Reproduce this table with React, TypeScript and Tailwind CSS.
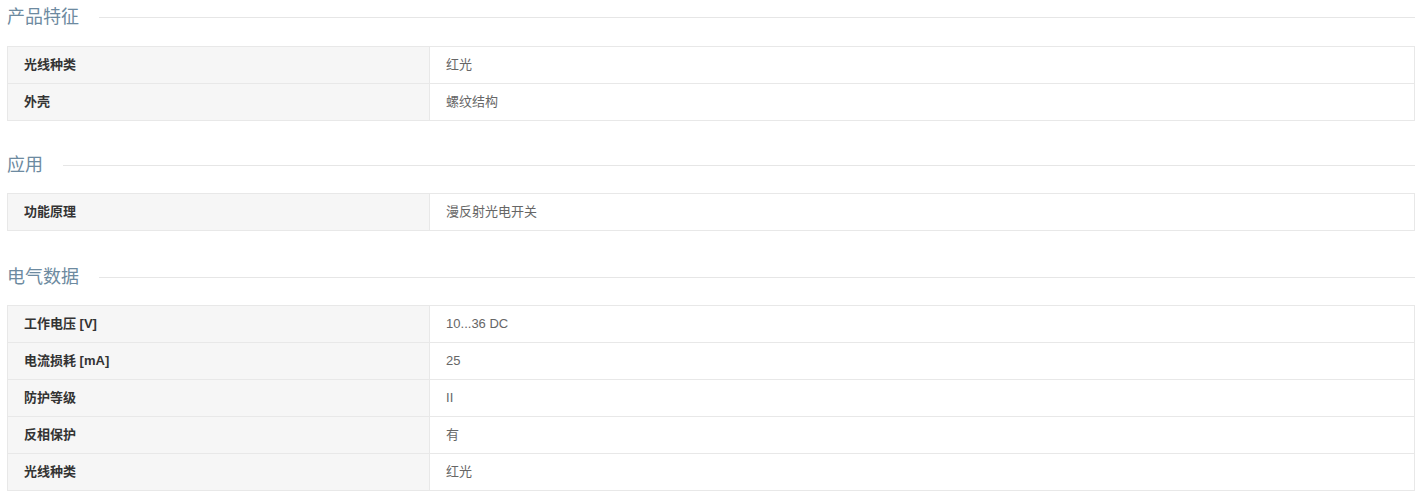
const sections: { title: string; rows: [string, string][] }[] = [
  {
    title: '产品特征',
    rows: [
      ['光线种类', '红光'],
      ['外壳', '螺纹结构'],
    ],
  },
  {
    title: '应用',
    rows: [['功能原理', '漫反射光电开关']],
  },
  {
    title: '电气数据',
    rows: [
      ['工作电压 [V]', '10...36 DC'],
      ['电流损耗 [mA]', '25'],
      ['防护等级', 'II'],
      ['反相保护', '有'],
      ['光线种类', '红光'],
    ],
  },
];

function SectionTitle({ title }: { title: string }) {
  return (
    <div className="flex items-center gap-5 h-6">
      <h3 className="text-[18px] leading-6 text-[#6d8aa0] font-normal whitespace-nowrap">{title}</h3>
      <div className="flex-1 border-t border-[#e6e6e6]" />
    </div>
  );
}

export default function App() {
  return (
    <div
      className="bg-white pl-[7px] pr-[6px] pt-[5px] pb-2"
      style={{ fontFamily: '"Liberation Sans", "Noto Sans CJK SC", sans-serif' }}
    >
      {sections.map((s, i) => (
        <div key={i} className={i === 0 ? '' : i === 1 ? 'mt-8' : 'mt-[34px]'}>
          <SectionTitle title={s.title} />
          <table className={`w-full border-collapse text-[13px] ${i === 0 ? 'mt-[17px]' : 'mt-4'}`}>
            <tbody>
              {s.rows.map(([k, v], j) => (
                <tr key={j} className="h-[37px]">
                  <td className="w-[30%] bg-[#f6f6f6] border border-[#e8e8e8] px-4 font-bold text-[#333]">{k}</td>
                  <td className="border border-[#e8e8e8] px-4 text-[#666]">{v}</td>
                </tr>
              ))}
            </tbody>
          </table>
        </div>
      ))}
    </div>
  );
}
